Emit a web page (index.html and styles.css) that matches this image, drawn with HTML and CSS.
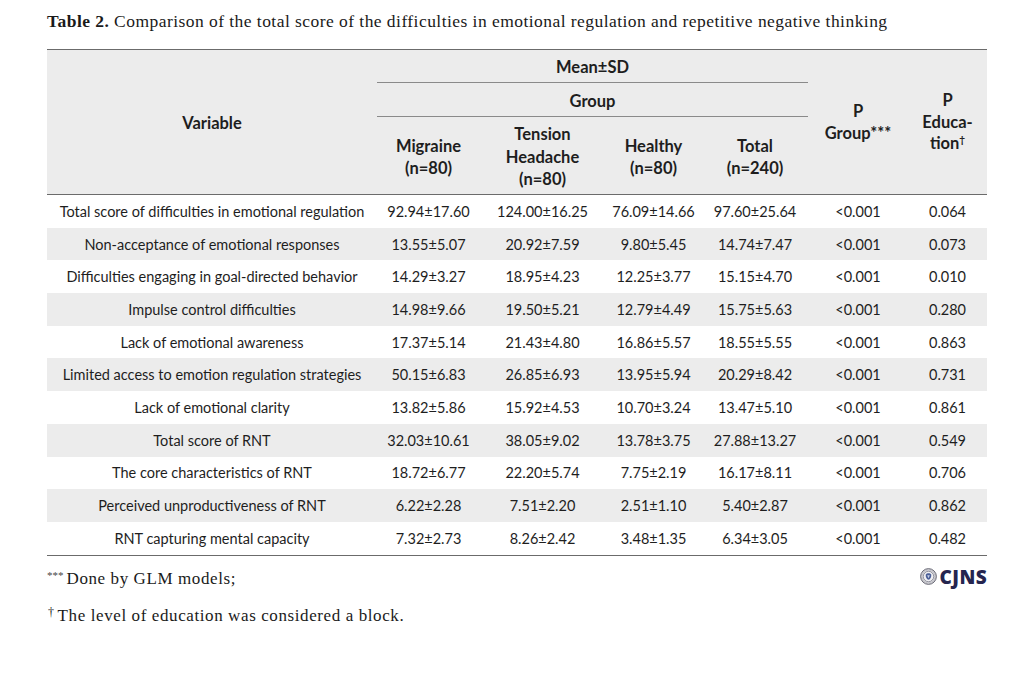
FILE: index.html
```html
<!DOCTYPE html>
<html>
<head>
<meta charset="utf-8">
<link rel="stylesheet" href="styles.css">
</head>
<body>
<div class="page">
  <p class="title"><b>Table 2.</b> Comparison of the total score of the difficulties in emotional regulation and repetitive negative thinking</p>
  <table class="tbl">
    <colgroup>
      <col class="c-var"><col class="c-mig"><col class="c-ten"><col class="c-hea"><col class="c-tot"><col class="c-pg"><col class="c-pe">
    </colgroup>
    <thead>
      <tr class="h1">
        <th rowspan="3" class="th-var">Variable</th>
        <th colspan="4" class="th-line">Mean±SD</th>
        <th rowspan="3" class="th-p">P<br>Group***</th>
        <th rowspan="3" class="th-p">P<br>Educa-<br>tion<sup>†</sup></th>
      </tr>
      <tr class="h2">
        <th colspan="4" class="th-line">Group</th>
      </tr>
      <tr class="h3">
        <th>Migraine<br>(n=80)</th>
        <th>Tension<br>Headache<br>(n=80)</th>
        <th>Healthy<br>(n=80)</th>
        <th>Total<br>(n=240)</th>
      </tr>
    </thead>
    <tbody>
      <tr><td>Total score of difficulties in emotional regulation</td><td>92.94±17.60</td><td>124.00±16.25</td><td>76.09±14.66</td><td>97.60±25.64</td><td>&lt;0.001</td><td>0.064</td></tr>
      <tr class="alt"><td>Non-acceptance of emotional responses</td><td>13.55±5.07</td><td>20.92±7.59</td><td>9.80±5.45</td><td>14.74±7.47</td><td>&lt;0.001</td><td>0.073</td></tr>
      <tr><td>Difficulties engaging in goal-directed behavior</td><td>14.29±3.27</td><td>18.95±4.23</td><td>12.25±3.77</td><td>15.15±4.70</td><td>&lt;0.001</td><td>0.010</td></tr>
      <tr class="alt"><td>Impulse control difficulties</td><td>14.98±9.66</td><td>19.50±5.21</td><td>12.79±4.49</td><td>15.75±5.63</td><td>&lt;0.001</td><td>0.280</td></tr>
      <tr><td>Lack of emotional awareness</td><td>17.37±5.14</td><td>21.43±4.80</td><td>16.86±5.57</td><td>18.55±5.55</td><td>&lt;0.001</td><td>0.863</td></tr>
      <tr class="alt"><td>Limited access to emotion regulation strategies</td><td>50.15±6.83</td><td>26.85±6.93</td><td>13.95±5.94</td><td>20.29±8.42</td><td>&lt;0.001</td><td>0.731</td></tr>
      <tr><td>Lack of emotional clarity</td><td>13.82±5.86</td><td>15.92±4.53</td><td>10.70±3.24</td><td>13.47±5.10</td><td>&lt;0.001</td><td>0.861</td></tr>
      <tr class="alt"><td>Total score of RNT</td><td>32.03±10.61</td><td>38.05±9.02</td><td>13.78±3.75</td><td>27.88±13.27</td><td>&lt;0.001</td><td>0.549</td></tr>
      <tr><td>The core characteristics of RNT</td><td>18.72±6.77</td><td>22.20±5.74</td><td>7.75±2.19</td><td>16.17±8.11</td><td>&lt;0.001</td><td>0.706</td></tr>
      <tr class="alt"><td>Perceived unproductiveness of RNT</td><td>6.22±2.28</td><td>7.51±2.20</td><td>2.51±1.10</td><td>5.40±2.87</td><td>&lt;0.001</td><td>0.862</td></tr>
      <tr><td>RNT capturing mental capacity</td><td>7.32±2.73</td><td>8.26±2.42</td><td>3.48±1.35</td><td>6.34±3.05</td><td>&lt;0.001</td><td>0.482</td></tr>
    </tbody>
  </table>
  <div class="foot">
    <div class="notes">
      <p class="note"><span class="stars">***</span>Done by GLM models;</p>
      <p class="note note2"><span class="dag">†</span>The level of education was considered a block.</p>
    </div>
    <div class="logo">
      <svg class="emblem" width="17" height="17" viewBox="0 0 16 16">
        <circle cx="8" cy="8" r="7.4" fill="#d6d6da" stroke="#5e5e6c" stroke-width="0.9"/>
        <circle cx="8" cy="8" r="6.2" fill="none" stroke="#9a9aa6" stroke-width="0.6" stroke-dasharray="0.8 0.6"/>
        <circle cx="8" cy="8" r="4.9" fill="#f0f0f3" stroke="#7a7a88" stroke-width="0.7"/>
        <path d="M5.4 6.4 C6.4 4.6 9.6 4.6 10.6 6.4 C10.9 8.5 9.6 10.8 8 11.1 C6.4 10.8 5.1 8.5 5.4 6.4Z" fill="#4b5f98"/>
        <path d="M6.7 6.8 L9.3 6.8 L8 9.6Z" fill="#c6cfe6"/>
      </svg>
      <span class="logo-text">CJNS</span>
    </div>
  </div>
</div>
</body>
</html>
```

FILE: styles.css
```css
html, body {
  margin: 0;
  padding: 0;
  background: #ffffff;
}
.page {
  width: 940px;
  padding-left: 47px;
}
.title {
  margin: 0;
  padding-top: 11px;
  height: 49px;
  box-sizing: border-box;
  font-family: "Liberation Serif", "Times New Roman", serif;
  font-size: 17.5px;
  line-height: 20px;
  letter-spacing: 0.45px;
  color: #1a1a1a;
  white-space: nowrap;
}
.title b {
  font-weight: bold;
}
.tbl {
  width: 940px;
  border-collapse: collapse;
  font-family: "Lato", "Open Sans", sans-serif;
  font-size: 14.5px;
  color: #1e1e1e;
  table-layout: fixed;
}
.c-var { width: 330px; }
.c-mig { width: 103px; }
.c-ten { width: 125px; }
.c-hea { width: 97px; }
.c-tot { width: 106px; }
.c-pg { width: 100px; }
.c-pe { width: 79px; }
.tbl thead {
  background: #ececec;
}
.tbl thead tr.h1 {
  border-top: 1.5px solid #6b6b6b;
}
.tbl th {
  font-weight: bold;
  font-size: 16.5px;
  text-align: center;
  vertical-align: middle;
  padding: 0;
  line-height: 22.5px;
}
.tbl th.th-var {
  padding-top: 2px;
}
.tbl th.th-p {
  line-height: 21.5px;
  padding-top: 1px;
}
.tbl th.th-line {
  border-bottom: 1px solid #8a8a8a;
  padding-top: 3px;
}
.tbl tr.h1 { height: 33px; }
.tbl tr.h2 { height: 34px; }
.tbl tr.h3 { height: 78px; }
.tbl tr.h3 th {
  border-bottom: 1.5px solid #6b6b6b;
  padding-top: 3px;
}
.tbl thead tr.h1 th.th-var,
.tbl thead tr.h1 th.th-p {
  border-bottom: 1.5px solid #6b6b6b;
}
.tbl sup {
  font-size: 10px;
  line-height: 0;
  vertical-align: 6px;
}
.tbl td {
  text-align: center;
  vertical-align: middle;
  padding: 0;
  height: 32.7px;
  white-space: nowrap;
}
.tbl tbody tr.alt {
  background: #ececec;
}
.tbl tbody tr:last-child td {
  border-bottom: 1.5px solid #6b6b6b;
}
.foot {
  display: flex;
  justify-content: space-between;
  align-items: flex-start;
  width: 940px;
}
.notes {
  font-family: "Liberation Serif", "Times New Roman", serif;
  font-size: 17px;
  letter-spacing: 0.6px;
  color: #1a1a1a;
}
.note {
  margin: 0;
  padding-top: 13px;
  line-height: 20px;
}
.note2 {
  padding-top: 17px;
}
.stars {
  font-size: 11px;
  vertical-align: 5px;
  line-height: 0;
  letter-spacing: 0;
  color: #444;
  margin-right: 3px;
}
.dag {
  font-size: 12px;
  vertical-align: 5px;
  line-height: 0;
  margin-right: 3px;
  margin-left: 1px;
}
.logo {
  display: flex;
  align-items: center;
  gap: 3px;
  padding-top: 12px;
}
.emblem {
  display: block;
}
.logo-text {
  font-family: "Open Sans", "Liberation Sans", sans-serif;
  font-weight: 800;
  font-size: 19px;
  color: #25254f;
  letter-spacing: 0.4px;
  line-height: 18px;
}
```
